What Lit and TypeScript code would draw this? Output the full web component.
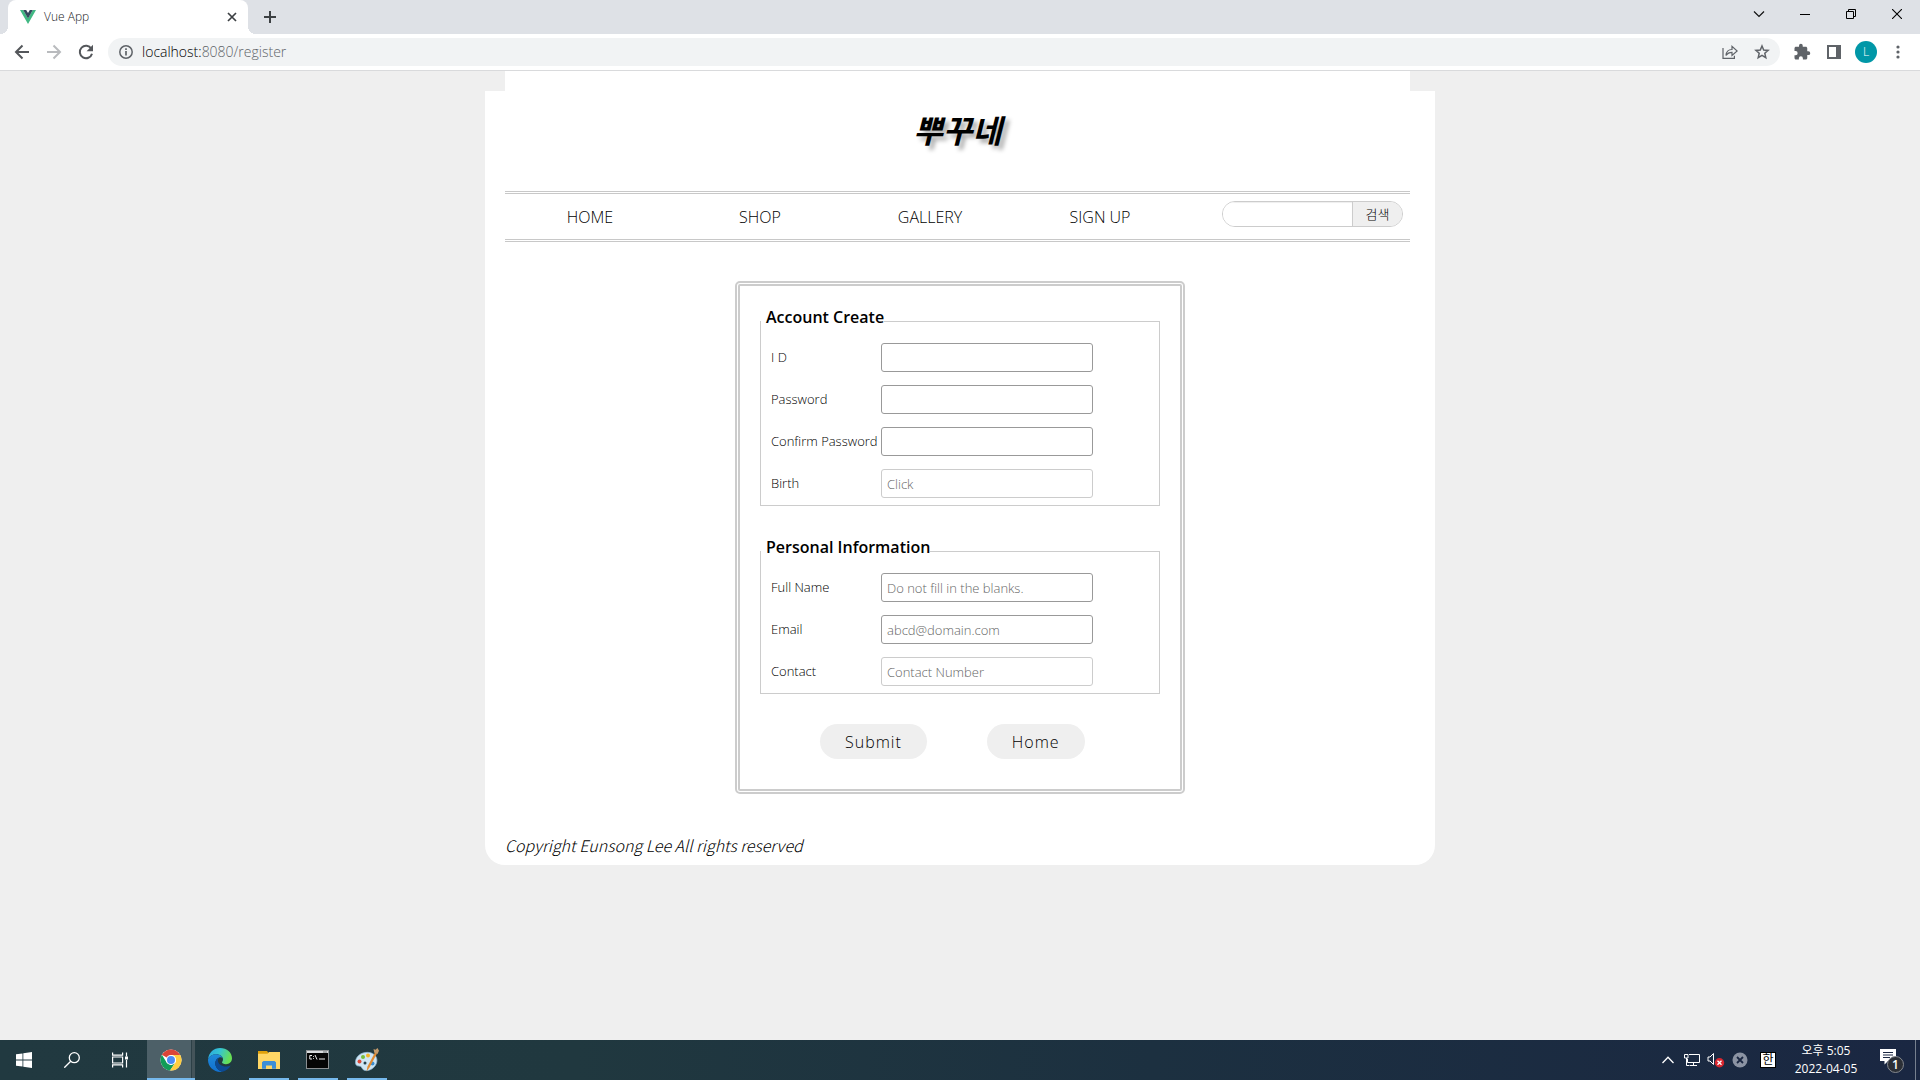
import { LitElement, html, css, svg, nothing } from "lit";
import { customElement, property } from "lit/decorators.js";

const base = css`
  *,
  *::before,
  *::after {
    box-sizing: border-box;
  }
  svg {
    display: block;
    flex: none;
  }
  button {
    font: inherit;
    color: inherit;
    border: 0;
    padding: 0;
    background: none;
  }
`;

/* ---------- Browser window frame ---------- */

@customElement("browser-chrome")
export class BrowserChrome extends LitElement {
  static styles = [
    base,
    css`
      :host {
        display: block;
        font-family: "Open Sans", "Noto Sans CJK KR", sans-serif;
        font-weight: 300;
        color: #202124;
      }
      .strip {
        display: flex;
        height: 34px;
        padding-left: 8px;
        background: #dee1e6;
      }
      .tab {
        position: relative;
        display: flex;
        align-items: center;
        width: 240px;
        padding: 0 8px 0 12px;
        gap: 8px;
        background: #fff;
        border-radius: 8px 8px 0 0;
        font-size: 12px;
        line-height: 16px;
      }
      .tab::before,
      .tab::after {
        content: "";
        position: absolute;
        bottom: 0;
        width: 8px;
        height: 8px;
      }
      .tab::before {
        left: -8px;
        background: radial-gradient(circle at 0 0, transparent 8px, #fff 8px);
      }
      .tab::after {
        right: -8px;
        background: radial-gradient(circle at 100% 0, transparent 8px, #fff 8px);
      }
      .title {
        flex: 1;
      }
      .icon {
        display: grid;
        place-items: center;
        width: 32px;
        height: 28px;
      }
      .icon.small {
        width: 16px;
        height: 16px;
      }
      .icon.new {
        height: 34px;
        margin-left: 6px;
      }
      .window {
        display: flex;
        margin-left: auto;
      }
      .window .icon {
        width: 46px;
      }
      .bar {
        display: flex;
        align-items: center;
        height: 37px;
        padding: 3px 6px 4px;
        background: #fff;
        border-bottom: 1px solid #d9dadc;
        color: #5f6368;
      }
      .omnibox {
        display: flex;
        flex: 1;
        align-items: center;
        height: 28px;
        margin: 0 6px;
        padding: 0 2px;
        background: #f1f3f4;
        border-radius: 14px;
      }
      .address {
        flex: 1;
        font-size: 14px;
        line-height: 20px;
      }
      .host {
        color: #000;
      }
      .avatar {
        display: grid;
        place-items: center;
        width: 22px;
        height: 22px;
        border-radius: 50%;
        background: #0097a7;
        color: #fff;
        font-size: 12px;
        line-height: 16px;
      }
    `,
  ];

  render() {
    return html`
      <div class="strip">
        <div class="tab">
          <svg width="16" height="16" viewBox="0 0 16 16">
            <path d="M0 1h3.2L8 9.3 12.8 1H16L8 15z" fill="#41b883" />
            <path d="M3.2 1h3L8 4.1 9.8 1h3L8 9.4z" fill="#35495e" />
          </svg>
          <span class="title">Vue App</span>
          <button class="icon small" aria-label="Close tab">
            <svg width="10" height="10" viewBox="0 0 10 10" stroke="#3c4043" stroke-width="1.7">
              <path d="M1 1l8 8M9 1L1 9" />
            </svg>
          </button>
        </div>
        <button class="icon new" aria-label="New tab">
          <svg width="12" height="12" viewBox="0 0 12 12" stroke="#3c4043" stroke-width="2">
            <path d="M6 0v12M0 6h12" />
          </svg>
        </button>
        <div class="window">
          <button class="icon" aria-label="Search tabs">
            <svg width="12" height="12" viewBox="0 0 12 12" fill="none" stroke="#111" stroke-width="1.200">
              <path d="M1 3.500l5 5 5-5" />
            </svg>
          </button>
          <button class="icon" aria-label="Minimize">
            <svg width="10" height="10" viewBox="0 0 10 10" stroke="#000"><path d="M0 5.500h10" /></svg>
          </button>
          <button class="icon" aria-label="Restore">
            <svg width="10" height="10" viewBox="0 0 10 10" fill="none" stroke="#000">
              <path d="M.5 2.500h7v7h-7zM2.500 2.500v-2h7v7h-2" />
            </svg>
          </button>
          <button class="icon" aria-label="Close">
            <svg width="10" height="10" viewBox="0 0 10 10" stroke="#000" stroke-width="1.100">
              <path d="M0 0l10 10M10 0L0 10" />
            </svg>
          </button>
        </div>
      </div>
      <div class="bar">
        <button class="icon" aria-label="Back">
          <svg width="16" height="16" viewBox="0 0 16 16" fill="none" stroke="#54575b" stroke-width="2">
            <path d="M15 8H2.500M8.500 1.500L2 8l6.500 6.500" />
          </svg>
        </button>
        <button class="icon" aria-label="Forward" disabled>
          <svg width="16" height="16" viewBox="0 0 16 16" fill="none" stroke="#b9bbbe" stroke-width="2">
            <path d="M1 8h12.500M7.500 1.500L14 8l-6.500 6.500" />
          </svg>
        </button>
        <button class="icon" aria-label="Reload">
          <svg width="16" height="16" viewBox="0 0 16 16">
            <path d="M13.300 4.700A6.200 6.200 0 1 0 14 9.700" fill="none" stroke="#54575b" stroke-width="2" />
            <path d="M15 .8v6.400H8.600z" fill="#54575b" />
          </svg>
        </button>
        <div class="omnibox">
          <button class="icon" aria-label="Site information">
            <svg width="14" height="14" viewBox="0 0 14 14" fill="none" stroke="#5f6368" stroke-width="1.500">
              <circle cx="7" cy="7" r="6.200" />
              <path d="M7 6v4.500M7 3.300v1.600" stroke-width="1.700" />
            </svg>
          </button>
          <span class="address"><span class="host">localhost:</span>8080/register</span>
          <button class="icon" aria-label="Share">
            <svg width="16" height="16" viewBox="0 0 16 16" fill="none" stroke="#5f6368" stroke-width="1.200">
              <path d="M1 4v10.400h11.400v-2.600" />
              <path d="M4 11.500c.3-4 2.500-6 6-6V2.300L15.200 7 10 11.400V8.300c-2.700 0-4.500.8-6 3.200z" />
            </svg>
          </button>
          <button class="icon" aria-label="Bookmark">
            <svg width="16" height="16" viewBox="0 0 16 16" fill="none" stroke="#5f6368" stroke-width="1.500">
              <path d="M8 2l1.700 4 4.400.4-3.300 2.900 1 4.300L8 11.300l-3.800 2.300 1-4.300L1.900 6.400 6.300 6z" />
            </svg>
          </button>
        </div>
        <button class="icon" aria-label="Extensions">
          <svg width="18" height="18" viewBox="0 0 24 24" fill="#5f6368">
            <path
              d="M20.500 11H19V7c0-1.100-.9-2-2-2h-4V3.500a2.500 2.500 0 0 0-5 0V5H4c-1.100 0-2 .9-2 2v3.800h1.500a2.700 2.700 0 0 1 0 5.400H2V20c0 1.100.9 2 2 2h3.800v-1.500a2.700 2.700 0 0 1 5.400 0V22H17c1.100 0 2-.9 2-2v-4h1.500a2.500 2.500 0 0 0 0-5z"
            />
          </svg>
        </button>
        <button class="icon" aria-label="Side panel">
          <svg width="14" height="14" viewBox="0 0 14 14">
            <path d="M1 1h12v12H1z" fill="none" stroke="#5f6368" stroke-width="2" />
            <path d="M9 1h4v12H9z" fill="#5f6368" />
          </svg>
        </button>
        <button class="icon" aria-label="Profile"><span class="avatar">L</span></button>
        <button class="icon" aria-label="Menu">
          <svg width="4" height="14" viewBox="0 0 4 14" fill="#5f6368">
            <circle cx="2" cy="2" r="1.600" /><circle cx="2" cy="7" r="1.600" /><circle cx="2" cy="12" r="1.600" />
          </svg>
        </button>
      </div>
    `;
  }
}

/* ---------- Registration page ---------- */

interface Field {
  id: string;
  label: string;
  type?: string;
  placeholder?: string;
  optional?: boolean;
}

interface Group {
  legend: string;
  fields: Field[];
}

const groups: Group[] = [
  {
    legend: "Account Create",
    fields: [
      { id: "userid", label: "I D" },
      { id: "password", label: "Password", type: "password" },
      { id: "confirm", label: "Confirm Password", type: "password" },
      { id: "birth", label: "Birth", placeholder: "Click", optional: true },
    ],
  },
  {
    legend: "Personal Information",
    fields: [
      { id: "name", label: "Full Name", placeholder: "Do not fill in the blanks." },
      { id: "email", label: "Email", type: "email", placeholder: "abcd@domain.com" },
      { id: "contact", label: "Contact", type: "tel", placeholder: "Contact Number", optional: true },
    ],
  },
];

const menu = ["HOME", "SHOP", "GALLERY", "SIGN UP"];

@customElement("register-page")
export class RegisterPage extends LitElement {
  static styles = [
    base,
    css`
      :host {
        display: block;
        overflow: hidden;
        background: #efefef;
        color: #000;
        font-family: "Open Sans", "Noto Sans CJK KR", sans-serif;
        font-size: 16px;
        font-weight: 300;
        line-height: 22px;
      }
      .column {
        max-width: 950px;
        margin: 0 auto;
      }
      .lip {
        height: 20px;
        margin: 0 25px 0 20px;
        background: #fff;
      }
      .wrap {
        padding: 0 20px 9px;
        background: #fff;
        border-radius: 0 0 20px 20px;
      }
      .top {
        margin-right: 5px;
      }
      .brand {
        margin: 0;
        padding: 20px 0 40px;
        font-size: 32px;
        line-height: 40px;
        font-style: italic;
        font-weight: 700;
        text-align: center;
        text-shadow: 4px 4px 4px #aaa;
      }
      .nav {
        display: flex;
        height: 51px;
        border: 3px double #c8c8c8;
        border-width: 3px 0;
      }
      .nav a {
        width: 170px;
        padding-top: 12px;
        color: inherit;
        text-align: center;
        text-decoration: none;
      }
      .search {
        display: flex;
        height: 26px;
        margin: 7px 7px 0 auto;
        border: 1px solid #ccc;
        border-radius: 13px;
        overflow: hidden;
        font-size: 13px;
        line-height: 20px;
      }
      .search input {
        width: 129px;
        border: 0;
        padding: 0 10px;
        font: inherit;
        outline: 0;
        background: #fff;
        box-shadow: inset 0 1px 1px #eee;
      }
      .search button {
        width: 50px;
        border-left: 1px solid #ccc;
        background: #efefef;
      }
      .card {
        max-width: 450px;
        margin: 39px auto 40px;
        padding: 20px 20px 30px;
        border: 5px double #ccc;
        border-radius: 5px;
      }
      fieldset {
        display: block;
        min-width: 0;
        margin: 0 0 30px;
        padding: 7px 10px;
        border: 1px solid #ccc;
      }
      legend {
        margin-left: -10px;
        padding: 0 0 8px 5px;
        font-weight: 600;
      }
      .fields {
        display: grid;
        grid-template-columns: 110px 212px;
        row-gap: 13px;
        align-items: center;
        font-size: 13px;
        line-height: 18px;
      }
      .fields label {
        padding-bottom: 2px;
        white-space: nowrap;
      }
      .fields input {
        width: 100%;
        height: 29px;
        padding: 0 5px;
        border: 1px solid #999;
        border-radius: 3px;
        background: #fff;
        font: inherit;
      }
      .fields input.optional {
        border-color: #ccc;
      }
      input::placeholder {
        color: #666;
      }
      .actions {
        display: flex;
        gap: 60px;
        padding-left: 60px;
      }
      .actions button {
        height: 35px;
        padding: 0 25px;
        border-radius: 18px;
        background: #efefef;
        letter-spacing: 1px;
      }
      footer {
        font-family: "Noto Sans CJK KR", sans-serif;
        font-style: italic;
      }
    `,
  ];

  private field(f: Field) {
    return html`
      <label for=${f.id}>${f.label}</label>
      <input
        id=${f.id}
        class=${f.optional ? "optional" : "required"}
        type=${f.type ?? "text"}
        placeholder=${f.placeholder ?? nothing}
      />
    `;
  }

  render() {
    return html`
      <div class="column">
        <div class="lip"></div>
        <div class="wrap">
          <header class="top">
            <h1 class="brand">뿌꾸네</h1>
            <nav class="nav">
              ${menu.map((m) => html`<a href="#">${m}</a>`)}
              <form class="search" role="search">
                <input type="text" aria-label="검색" />
                <button type="button">검색</button>
              </form>
            </nav>
          </header>
          <form class="card">
            ${groups.map(
              (g) => html`
                <fieldset>
                  <legend>${g.legend}</legend>
                  <div class="fields">${g.fields.map((f) => this.field(f))}</div>
                </fieldset>
              `
            )}
            <div class="actions">
              <button type="button">Submit</button>
              <button type="button">Home</button>
            </div>
          </form>
          <footer>Copyright Eunsong Lee All rights reserved</footer>
        </div>
      </div>
    `;
  }
}

/* ---------- Desktop task bar ---------- */

const startIcon = svg`<svg width="16" height="16" viewBox="0 0 16 16" fill="#fff">
  <path d="M0 2.300L6.500 1.400V7.600H0zM7.300 1.300L16 0v7.600H7.300zM0 8.400h6.500v6.200L0 13.700zM7.300 8.400H16V16l-8.700-1.300z"/></svg>`;

const searchIcon = svg`<svg width="16" height="16" viewBox="0 0 16 16" fill="none" stroke="#fff" stroke-width="1.300">
  <circle cx="10.300" cy="5.700" r="5"/><path d="M6.700 9.300L.3 15.700"/></svg>`;

const viewIcon = svg`<svg width="16" height="16" viewBox="0 0 16 16" fill="none" stroke="#fff" stroke-width="1.200">
  <path d="M.6.500v2.600h10V.5M.6 15.500v-2.600h10v2.600M.6 5h10v6H.6zM14.500.5v4M14.500 8v7.500"/>
  <path d="M13 4.500h3v3h-3z" fill="#fff" stroke="none"/></svg>`;

const chromeIcon = svg`<svg width="22" height="22" viewBox="0 0 48 48">
  <circle cx="24" cy="24" r="23" fill="#fff"/>
  <path d="M24 24L4.100 12.500A23 23 0 0 1 43.900 12.500L44 13H24z" fill="#dc4437"/>
  <path d="M4.100 12.500A23 23 0 0 0 22 46.900L33.500 29.500 24 35 14.500 29.500z" fill="#109d58"/>
  <path d="M43.900 12.500A23 23 0 0 1 22 46.900L33.500 29.500A11 11 0 0 0 24 13h20z" fill="#ffcd40"/>
  <circle cx="24" cy="24" r="11" fill="#fff"/><circle cx="24" cy="24" r="8.700" fill="#4c8bf5"/></svg>`;

const edgeIcon = svg`<svg width="24" height="24" viewBox="0 0 24 24">
  <defs>
    <linearGradient id="e1" x1="0" y1="0" x2="1" y2="0.300"><stop offset="0" stop-color="#2aa6e0"/><stop offset=".5" stop-color="#35c4d3"/><stop offset="1" stop-color="#67df55"/></linearGradient>
    <linearGradient id="e2" x1="0" y1="0" x2="0" y2="1"><stop offset="0" stop-color="#1f8ad9"/><stop offset="1" stop-color="#1170cf"/></linearGradient>
  </defs>
  <path d="M.1 11C.8 4.500 5.800 0 12 0c7 0 12 4.700 12 10.300 0 3.500-2.700 5.900-6 5.900-2.500 0-4-.9-4-1.900 0-.7 1-1.200 1-2.900C15 8.500 12 6.300 8.300 6.300 4.500 6.300 1.500 8.300.1 11z" fill="url(#e1)"/>
  <path d="M.1 11c1.400-2.700 4.400-4.700 8.200-4.700 3 0 5.500 1.500 6.400 3.700-1-.8-2.300-1-3.500-.5C8.500 10.500 7 13.300 7.300 16c.4 3.900 3.700 7.200 7.400 7.700C6.700 25 .1 19.300 0 12z" fill="url(#e2)"/>
  <path d="M11.200 9.500C8.500 10.500 7 13.300 7.300 16c.4 3.900 3.700 7.200 7.400 7.700 3.500-.8 6-2.700 7.700-5.600.2-.4-.1-.6-.4-.4-1 .5-2.300.8-3.700.8-4.700 0-8.400-2.600-8.400-6 0-1.300.7-2.400 1.700-3z" fill="#0c4a94"/></svg>`;

const folderIcon = svg`<svg width="22" height="18" viewBox="0 0 22 18">
  <path d="M0 0h9l1.500 2H22v4H0z" fill="#e0a20b"/>
  <path d="M0 2.800h9.500L11 1h11v17H0z" fill="#ffd765"/>
  <path d="M4 17.800v-6.500L5.500 10h11l1.500 1.300v6.500h-4V14.500H8v3.300z" fill="#3d8fd6"/></svg>`;

const cmdIcon = svg`<svg width="24" height="20" viewBox="0 0 24 20">
  <rect x=".5" y=".5" width="22" height="18" fill="#050505" stroke="#8b8f92"/>
  <path d="M1 1h21v2H1z" fill="#d9dcde"/><path d="M17 2h4" stroke="#6d7275"/>
  <path d="M6 5.500H3.800v3.500H6M7.500 6v.8M7.500 8v.8M9 5l2 4.500M13 9h6" fill="none" stroke="#eee" stroke-width="1"/></svg>`;

const paintIcon = svg`<svg width="24" height="24" viewBox="0 0 24 24">
  <path d="M10 4.500C4 5.500 0 10 .5 15c.4 3.500 3.300 3 4.600 3.200 1.800.3 1.700 3 4 4 4.500 1.800 11.500-2.300 12.700-8.200C23 8 17.500 3.300 10 4.500z" fill="#cfe5f3" stroke="#8bb4d1" stroke-width=".7"/>
  <circle cx="4.500" cy="13.500" r="2" fill="#dd4a3a"/><circle cx="8" cy="9" r="2" fill="#76bd3c"/>
  <circle cx="13" cy="7.500" r="2" fill="#f3b528"/><circle cx="10" cy="15" r="1.500" fill="#23414d"/><circle cx="17.500" cy="15.500" r="2" fill="#3b8fd1"/>
  <path d="M11.500 23.500l1-5L20 4.500l2 1L14.500 19.500z" fill="#e08a32"/>
  <path d="M19.300 4.800L18.500 1l2 .8L22.500 0l1.500 2.800L22.500 6z" fill="#c39a6b"/></svg>`;

@customElement("task-button")
export class TaskButton extends LitElement {
  @property() name = "";
  @property({ type: Boolean }) running = false;
  @property({ type: Boolean }) active = false;

  static styles = [
    base,
    css`
      :host {
        display: block;
      }
      .task {
        display: grid;
        place-items: center;
        width: 48px;
        height: 40px;
        border-bottom: 2px solid transparent;
        padding-top: 2px;
      }
      .running {
        background: linear-gradient(#76b9ed, #76b9ed) center bottom / 40px 2px no-repeat border-box;
      }
      .active {
        background: #4d6068;
        border-bottom-color: #76b9ed;
        box-shadow: inset -3px 0 #44545a, inset -4px 0 #2c4047;
      }
    `,
  ];

  render() {
    const state = this.active ? "active" : this.running ? "running" : "";
    return html`<button class="task ${state}" aria-label=${this.name}><slot></slot></button>`;
  }
}

@customElement("task-bar")
export class TaskBar extends LitElement {
  static styles = [
    base,
    css`
      :host {
        display: flex;
        height: 40px;
        background: linear-gradient(90deg, #213940, #20383f 30%, #1c3040 60%, #1a2742);
        color: #fff;
        font-family: "Open Sans", "Noto Sans CJK KR", sans-serif;
      }
      .pinned {
        display: flex;
      }
      .apps {
        display: flex;
        gap: 1px;
        margin-left: 3px;
      }
      .tray {
        display: flex;
        align-items: center;
        margin-left: auto;
      }
      .item {
        display: grid;
        place-items: center;
        width: 24px;
        height: 40px;
      }
      .ime {
        width: 32px;
      }
      .key {
        width: 16px;
        height: 16px;
        border: 1px solid #000;
        background: #fff;
        color: #000;
        font-size: 12px;
        line-height: 14px;
        text-align: center;
      }
      .clock {
        display: block;
        width: 84px;
        font-size: 12px;
        line-height: 18px;
        text-align: center;
      }
      .notes {
        width: 48px;
        border-right: 1px solid #76808f;
      }
      .edge {
        width: 4px;
      }
    `,
  ];

  render() {
    return html`
      <div class="pinned">
        <task-button name="Start">${startIcon}</task-button>
        <task-button name="Search">${searchIcon}</task-button>
        <task-button name="Task view">${viewIcon}</task-button>
      </div>
      <div class="apps">
        <task-button name="Chrome" active>${chromeIcon}</task-button>
        <task-button name="Edge">${edgeIcon}</task-button>
        <task-button name="File Explorer" running>${folderIcon}</task-button>
        <task-button name="Command Prompt" running>${cmdIcon}</task-button>
        <task-button name="Paint" running>${paintIcon}</task-button>
      </div>
      <div class="tray">
        <button class="item" aria-label="Hidden icons">
          <svg width="12" height="8" viewBox="0 0 12 8" fill="none" stroke="#fff" stroke-width="1.300">
            <path d="M.5 7L6 1.200 11.500 7" />
          </svg>
        </button>
        <button class="item" aria-label="Network">
          <svg width="16" height="14" viewBox="0 0 16 14" fill="none" stroke="#fff">
            <path d="M5 1.500h10.500v8H3.500V6M9.500 9.500v3M6 12.500h7M.5 1.500h3.500v3.500h-3.500zM2.500 5v7.500h3" />
          </svg>
        </button>
        <button class="item" aria-label="Volume muted">
          <svg width="18" height="16" viewBox="0 0 18 16">
            <path d="M1 5h2l3.500-3.500v11L3 9H1z" fill="none" stroke="#fff" />
            <circle cx="12.500" cy="10.800" r="4.700" fill="#d8262f" />
            <path d="M10.500 8.800l4 4M14.500 8.800l-4 4" stroke="#fff" stroke-width="1.300" />
          </svg>
        </button>
        <button class="item" aria-label="Offline">
          <svg width="16" height="16" viewBox="0 0 16 16">
            <circle cx="8" cy="8" r="7.500" fill="#8b93a3" />
            <path d="M5 5l6 6M11 5l-6 6" stroke="#1a2742" stroke-width="1.800" />
          </svg>
        </button>
        <button class="item ime" aria-label="Input language"><span class="key">한</span></button>
        <button class="clock">오후 5:05<br />2022-04-05</button>
        <button class="item notes" aria-label="Notifications">
          <svg width="26" height="26" viewBox="0 0 26 26">
            <path d="M1 2h16v12H9l-3.500 3.500V14H1z" fill="#fff" />
            <path d="M4 5.500h10M4 8h10M4 10.500h7" stroke="#1a2742" />
            <circle cx="16.500" cy="17.500" r="8" fill="#2b2f36" stroke="#85898f" />
            <text x="16.500" y="22" fill="#fff" font-size="12" font-weight="600" text-anchor="middle">1</text>
          </svg>
        </button>
        <div class="edge"></div>
      </div>
    `;
  }
}

@customElement("app-root")
export class AppRoot extends LitElement {
  static styles = css`
    :host {
      display: grid;
      grid-template-rows: auto 1fr auto;
      min-height: 100vh;
    }
  `;

  render() {
    return html`
      <browser-chrome></browser-chrome>
      <register-page></register-page>
      <task-bar></task-bar>
    `;
  }
}
